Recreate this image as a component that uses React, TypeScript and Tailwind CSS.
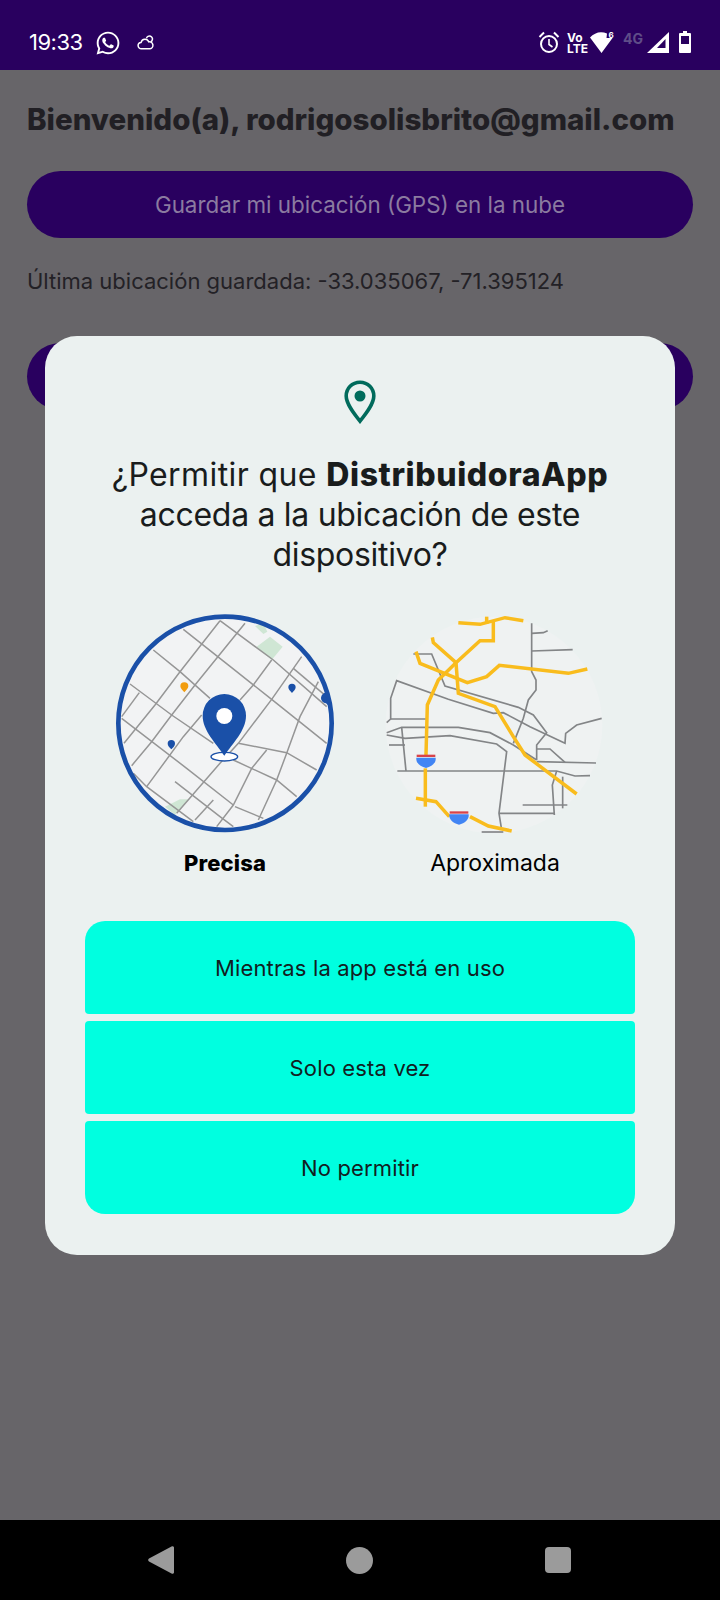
import React from "react";
import { FaWhatsapp } from "react-icons/fa";

const F = "font-['Inter',sans-serif]";

function PreciseMap() {
  const streets = [
    "M435 70L350 175L285 255L215 345L155 425L95 497",
    "M360 62L240 215L165 315L72 430",
    "M118 278L65 350",
    "M605 170L515 298L415 430L360 490L230 640",
    "M515 180L460 255L420 300",
    "M305 345L250 410L140 560",
    "M250 88L410 215L515 298L680 430",
    "M360 62L520 180L680 320",
    "M160 150L240 215L330 295",
    "M90 252L215 345L340 430",
    "M65 355L260 505L400 615",
    "M225 545L360 650L400 680",
    "M100 520L140 560L280 665",
    "M415 430L560 458L650 510",
    "M400 480L530 540L590 590",
    "M500 450L455 505L400 615L350 680",
    "M655 245L600 350L560 460L530 540L475 660",
    "M405 620L490 655",
    "M340 600L285 660",
    "M580 205L680 290",
  ];
  return (
    <svg width="250" height="250" viewBox="0 0 750 750" className="block">
      <defs>
        <clipPath id="clipPrecise">
          <circle cx="375" cy="370" r="318" />
        </clipPath>
      </defs>
      <circle cx="375" cy="370" r="318" fill="#f2f3f4" />
      <g clipPath="url(#clipPrecise)">
        <path d="M470 140L510 110L548 140L515 180Z" fill="#cfe6d4" />
        <path d="M465 78L490 70L502 95L490 102Z" fill="#cfe6d4" />
        <path d="M195 620L240 598L265 598L225 645Z" fill="#cfe6d4" />
        {streets.map((d) => (
          <path key={d} d={d} fill="none" stroke="#969696" strokeWidth="4.5" />
        ))}
        <path d="M680 278l14 16l-4 28l-12 -12a16 16 0 0 1 2 -32z" fill="#1a50a8" />
      </g>
      <circle cx="375" cy="370" r="320" fill="none" stroke="#1a50a8" strokeWidth="14" />
      <path d="M253 247a12 12 0 0 1 12 12c0 7 -7 11 -12 18c-5 -7 -12 -11 -12 -18a12 12 0 0 1 12 -12z" fill="#f29d0f" />
      <path d="M576 251a11 11 0 0 1 11 11c0 7 -6 11 -11 17c-5 -6 -11 -10 -11 -17a11 11 0 0 1 11 -11z" fill="#1a50a8" />
      <path d="M214 420a11 11 0 0 1 11 11c0 7 -6 11 -11 17c-5 -6 -11 -10 -11 -17a11 11 0 0 1 11 -11z" fill="#1a50a8" />
      <ellipse cx="373" cy="470" rx="40" ry="13" fill="#fff" stroke="#1a50a8" strokeWidth="4" />
      <path d="M373 282a65 65 0 0 1 65 65c0 45 -40 82 -65 120c-25 -38 -65 -75 -65 -120a65 65 0 0 1 65 -65z" fill="#1a50a8" />
      <circle cx="373" cy="348" r="24" fill="#fff" />
    </svg>
  );
}

function Shield({ x, y }: { x: number; y: number }) {
  return (
    <g>
      <path d={`M${x - 28} ${y - 4}h56v7h-56z`} fill="#d8434a" />
      <path d={`M${x - 29} ${y + 5}h58c2 16 -12 27 -29 31c-17 -4 -31 -15 -29 -31z`} fill="#4285f4" />
    </g>
  );
}

function ApproxMap() {
  const gray = [
    "M485 70L485 215L498 240L498 270L475 300L460 355L430 430",
    "M485 100L520 98L533 92",
    "M485 153L608 149",
    "M130 162L185 162L225 258L445 322L490 345L530 398L500 435L500 480",
    "M50 368L62 357L62 295L80 242L235 298L370 340L400 338L480 380L585 430L587 400L620 375L695 355",
    "M62 357L168 357",
    "M50 398L95 382L265 382L360 398L430 435L500 480",
    "M50 405L105 415L240 407L380 432L410 455L387 640L395 690",
    "M95 382L108 513",
    "M57 435L105 435",
    "M82 513L560 513L615 528L660 527",
    "M500 447L540 447L585 487",
    "M500 485L678 489",
    "M560 513L547 555L553 645",
    "M578 530L578 625",
    "M458 615L592 615",
    "M387 640L555 640",
    "M335 696L400 696",
  ];
  const yellow = [
    "M265 68L330 73L405 53L460 62",
    "M350 50L350 72",
    "M370 65L370 122L330 122L258 188L205 240L172 315L168 465",
    "M187 112L190 128L258 188L265 280L375 320L430 410L465 465L620 582",
    "M138 155L150 190L292 248L350 230L388 196L595 220L652 207",
    "M166 505L166 620",
    "M138 595L198 605L238 650",
    "M300 650L355 678L425 693",
  ];
  return (
    <svg width="250" height="250" viewBox="0 0 750 750" className="block">
      <circle cx="372" cy="375" r="325" fill="#eff2f2" />
      {gray.map((d) => (
        <path key={d} d={d} fill="none" stroke="#838587" strokeWidth="5" />
      ))}
      {yellow.map((d) => (
        <path key={d} d={d} fill="none" stroke="#f9bc1d" strokeWidth="10.5" />
      ))}
      <Shield x={168} y={468} />
      <Shield x={267} y={638} />
    </svg>
  );
}

function StatusBar() {
  return (
    <div className="h-[70px] shrink-0 bg-[#29005f] flex items-start justify-between pt-[31px] pl-[29px] pr-[29px] text-white">
      <div className="flex items-center gap-[12px] h-[23px]">
        <span className={`${F} text-[22px] font-normal leading-[23px] tracking-[-0.5px]`}>19:33</span>
        <FaWhatsapp size={26} />
        <svg width="18" height="15" viewBox="0 0 18 15" fill="none" stroke="#fff" strokeWidth="1.5" className="ml-[4px]">
          <path d="M4.5 13.8a3.2 3.2 0 0 1 -.4 -6.4a4 4 0 0 1 7.6 -.6a3.5 3.5 0 0 1 1.3 7z" />
          <path d="M9.5 3.4a3 3 0 1 1 5.5 2.2a3 3 0 0 1 -1.2 1.3" />
        </svg>
      </div>
      <div className="flex items-start h-[23px]">
        <svg width="22" height="23" viewBox="0 0 22 23" fill="none" stroke="#fff" className="mr-[7px]">
          <circle cx="11" cy="13" r="8" strokeWidth="2" />
          <path d="M11 8v5.5l3.5 2.5" strokeWidth="1.6" />
          <path d="M1.5 6L6 1.5M20.5 6L16 1.5" strokeWidth="2" />
        </svg>
        <div className={`${F} w-[20px] mr-[3px] flex flex-col font-bold text-[12px] leading-[11px] mt-[1px]`}>
          <span>Vo</span>
          <span>LTE</span>
        </div>
        <svg width="26" height="22" viewBox="0 0 26 22" fill="#fff" className="mr-[7px]">
          <path d="M0 6.5C3 3.2 7 1.2 11 1.2c2 0 4 .4 6 1.2l-.5 4.6h6L11.5 22z" />
          <text x="18.5" y="7" fontSize="8" fontWeight="700" fontFamily="Inter, sans-serif">6</text>
        </svg>
        <span className={`${F} w-[21px] text-[#5f4d88] font-bold text-[14px] leading-[14px] mt-[1px] mr-[3px]`}>4G</span>
        <svg width="22" height="21" viewBox="0 0 22 21" className="mr-[10px] mt-[1px]">
          <path d="M22 0V21H0Z" fill="#fff" />
          <path d="M18.5 7V16H10Z" fill="#29005f" />
        </svg>
        <svg width="12" height="22" viewBox="0 0 12 22">
          <path d="M4 0h4v2h3a1 1 0 0 1 1 1v18a1 1 0 0 1 -1 1H1a1 1 0 0 1 -1 -1V3a1 1 0 0 1 1 -1h3z" fill="#fff" />
          <rect x="2" y="5" width="8" height="8" fill="#29005f" />
        </svg>
      </div>
    </div>
  );
}

function NavBar() {
  return (
    <div className="h-[80px] shrink-0 bg-black flex items-center">
      <div className="ml-[148px] mr-[172px]">
        <svg width="26" height="28" viewBox="0 0 26 28" fill="#9b9b9b" className="block">
          <path d="M24 0.3a1.5 1.5 0 0 1 2 1.5v24.4a1.5 1.5 0 0 1 -2 1.5L1 15.5a2 2 0 0 1 0 -3z" />
        </svg>
      </div>
      <div className="w-[27px] h-[27px] rounded-full bg-[#9b9b9b] mr-[172px]" />
      <div className="w-[26px] h-[26px] rounded-[4px] bg-[#9b9b9b]" />
    </div>
  );
}

function Choice({ label, className }: { label: string; className: string }) {
  return (
    <div className={`h-[93px] pt-[2px] bg-[#00ffe0] flex items-center justify-center text-[#12201f] text-[22px] font-normal tracking-[0.15px] ${className}`}>
      {label}
    </div>
  );
}

function Dialog() {
  return (
    <div className="absolute left-[45px] top-[266px] w-[630px] h-[919px] rounded-[32px] bg-[#ebf1f0] flex flex-col items-center pt-[44px] text-[#191c1c]">
      <svg width="32" height="44" viewBox="0 0 32 44" className="block">
        <path d="M16 2.2C8 2.2 2.2 8.5 2.2 16c0 8 8 18 13.8 25.2C21.8 34 29.8 24 29.8 16 29.8 8.5 24 2.2 16 2.2z" fill="none" stroke="#016b5c" strokeWidth="3.6" />
        <circle cx="16" cy="16" r="5.5" fill="#016b5c" />
      </svg>
      <h2 className="mt-[31px] w-[560px] text-center text-[32px] leading-[40px] font-normal tracking-[-0.3px]">
        <span className="tracking-[0.4px]">¿Permitir que </span>
        <b className="font-extrabold tracking-[0.6px]">DistribuidoraApp</b> acceda a la ubicación de este dispositivo?
      </h2>
      <div className="mt-[25px] w-full pl-[55px] flex gap-[20px]">
        <div className="w-[250px] flex flex-col items-center">
          <PreciseMap />
          <span className="mt-[1px] leading-[24px] text-[22px] tracking-[0.15px] font-extrabold text-black">Precisa</span>
        </div>
        <div className="w-[250px] flex flex-col items-center">
          <ApproxMap />
          <span className="mt-[1px] leading-[24px] text-[23px] text-black">Aproximada</span>
        </div>
      </div>
      <div className="mt-[46px] w-[550px] flex flex-col gap-[7px]">
        <Choice label="Mientras la app está en uso" className="rounded-t-[20px] rounded-b-[4px]" />
        <Choice label="Solo esta vez" className="rounded-[4px]" />
        <Choice label="No permitir" className="rounded-t-[4px] rounded-b-[20px]" />
      </div>
    </div>
  );
}

export default function App() {
  return (
    <div className={`${F} w-[720px] h-[1600px] flex flex-col overflow-hidden bg-[#676569]`}>
      <StatusBar />
      <main className="relative flex-1 px-[27px] pt-[29px]">
        <h1 className="text-[29.5px] leading-[40px] font-extrabold text-[#211f24] whitespace-nowrap">
          Bienvenido(a), rodrigosolisbrito@gmail.com
        </h1>
        <div className="mt-[32px] h-[67px] rounded-full bg-[#29005f] flex items-center justify-center text-[22.4px] text-[#8b7ba0]">
          Guardar mi ubicación (GPS) en la nube
        </div>
        <p className="mt-[28px] text-[22px] leading-[30px] text-[#232126]">
          Última ubicación guardada: -33.035067, -71.395124
        </p>
        <div className="mt-[47px] h-[67px] rounded-full bg-[#29005f]" />
        <Dialog />
      </main>
      <NavBar />
    </div>
  );
}
